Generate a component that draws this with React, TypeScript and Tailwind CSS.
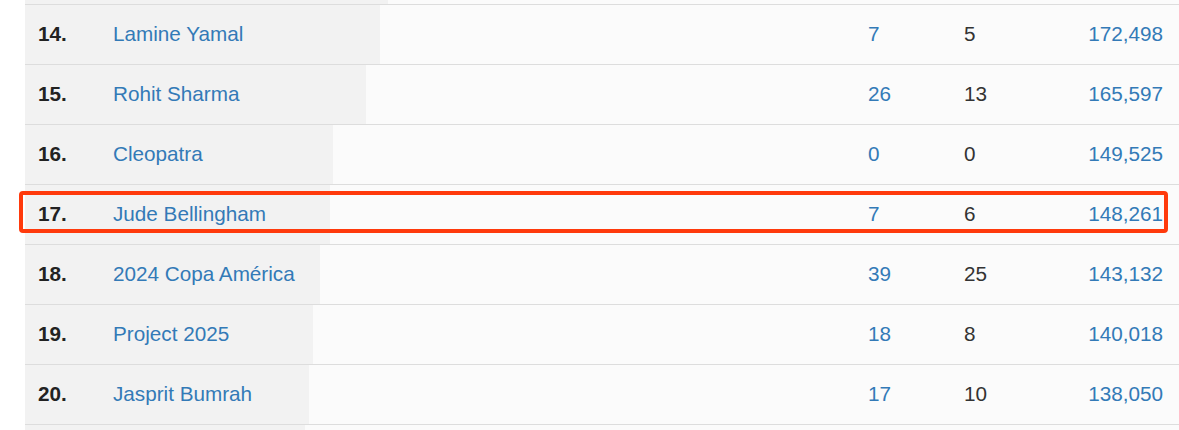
import React from "react";

type Row = { rank: number; name: string; a: number; b: number; views: number; ghost?: boolean };

const rows: Row[] = [
  { rank: 13, name: "", a: 0, b: 0, views: 176400, ghost: true },
  { rank: 14, name: "Lamine Yamal", a: 7, b: 5, views: 172498 },
  { rank: 15, name: "Rohit Sharma", a: 26, b: 13, views: 165597 },
  { rank: 16, name: "Cleopatra", a: 0, b: 0, views: 149525 },
  { rank: 17, name: "Jude Bellingham", a: 7, b: 6, views: 148261 },
  { rank: 18, name: "2024 Copa América", a: 39, b: 25, views: 143132 },
  { rank: 19, name: "Project 2025", a: 18, b: 8, views: 140018 },
  { rank: 20, name: "Jasprit Bumrah", a: 17, b: 10, views: 138050 },
  { rank: 21, name: "", a: 0, b: 0, views: 136200, ghost: true },
];

export default function App() {
  return (
    <div
      className="w-[1179px] h-[430px] overflow-hidden bg-white"
      style={{ fontFamily: '"Liberation Sans", Arial, sans-serif' }}
    >
      <div className="-mt-[56px] ml-[25px]">
        {rows.map((r) => {
          const w = Math.round(r.views * 0.002058);
          return (
            <div
              key={r.rank}
              className="relative flex items-center h-[60px] pb-[2px] border-t border-[#dddddd] text-[20.7px]"
              style={{
                background: `linear-gradient(to right, #f2f2f2 ${w}px, #fbfbfb ${w}px)`,
              }}
            >
              {!r.ghost && (
                <>
                  <div className="w-[88px] pl-[13px] font-bold text-[#222222]">{r.rank}.</div>
                  <div className="w-[755px] text-[#337ab7]">{r.name}</div>
                  <div className="w-[96px] text-[#337ab7]">{r.a}</div>
                  <div className="w-[80px] text-[#333333]">{r.b}</div>
                  <div className="flex-1 text-right pr-[16px] text-[#337ab7]">
                    {r.views.toLocaleString("en-US")}
                  </div>
                </>
              )}
              {r.rank === 17 && (
                <div className="absolute left-[-6px] top-[6px] w-[1149px] h-[42px] border-[4px] border-[#ff3a0c] rounded-[4px] pointer-events-none" />
              )}
            </div>
          );
        })}
      </div>
    </div>
  );
}
